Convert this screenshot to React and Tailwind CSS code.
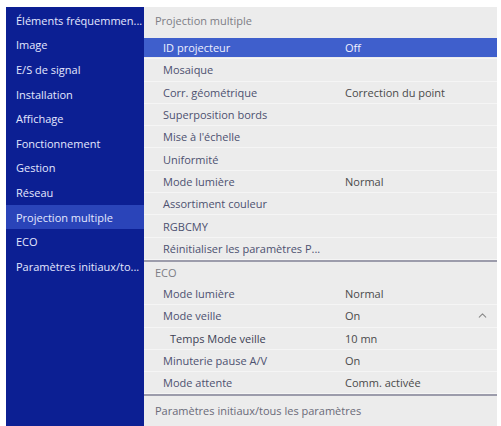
import React from 'react';
import { ChevronUp } from 'lucide-react';

const sideItems = [
  'Éléments fréquemmen...',
  'Image',
  'E/S de signal',
  'Installation',
  'Affichage',
  'Fonctionnement',
  'Gestion',
  'Réseau',
  'Projection multiple',
  'ECO',
  'Paramètres initiaux/to...',
];

const multiRows = [
  { label: 'ID projecteur', value: 'Off', active: true },
  { label: 'Mosaique' },
  { label: 'Corr. géométrique', value: 'Correction du point' },
  { label: 'Superposition bords' },
  { label: "Mise à l'échelle" },
  { label: 'Uniformité' },
  { label: 'Mode lumière', value: 'Normal' },
  { label: 'Assortiment couleur' },
  { label: 'RGBCMY' },
  { label: 'Réinitialiser les paramètres P...' },
];

const ecoRows = [
  { label: 'Mode lumière', value: 'Normal' },
  { label: 'Mode veille', value: 'On', chevron: true },
  { label: 'Temps Mode veille', value: '10 mn', indent: true },
  { label: 'Minuterie pause A/V', value: 'On' },
  { label: 'Mode attente', value: 'Comm. activée' },
];

const Row = ({ label, value, active, indent, chevron }) => (
  <div className="h-[22.3px] flex items-stretch border-b border-[#f5f5f5]">
    <div
      className={`flex-1 flex items-center ${
        active ? 'bg-[#3f5fcc] text-[#eef0ff] my-[1px]' : 'text-[#4c5170]'
      }`}
    >
      <span className={`w-[201px] shrink-0 whitespace-nowrap ${indent ? 'pl-[26px] text-[#3c3f55]' : 'pl-[19px]'}`}>
        {label}
      </span>
      {value && (
        <span className={active ? 'text-[#f2f2ff]' : 'text-[#4a4a4a]'}>{value}</span>
      )}
      {chevron && <ChevronUp size={13} className="ml-auto mr-[8px] text-[#8a8a8a]" />}
    </div>
  </div>
);

export default function App() {
  return (
    <div
      className="w-[501px] h-[426px] bg-white pt-[7px] pl-[6px] pr-[4px] flex overflow-hidden text-[11px] leading-[15px]"
      style={{ fontFamily: '"Open Sans", "Noto Sans", sans-serif' }}
    >
      <div className="w-[138px] shrink-0 bg-[#0c1f93] text-[#e4e8ff] pt-[1px]">
        {sideItems.map((s) => (
          <div
            key={s}
            className={`h-[24.6px] flex items-center pl-[10px] whitespace-nowrap ${
              s === 'Projection multiple' ? 'bg-[#2a44b9]' : ''
            }`}
          >
            {s}
          </div>
        ))}
      </div>
      <div className="flex-1 bg-[#ececec] flex flex-col">
        <div className="h-[26px] flex items-center pl-[11px] text-[#7d7d85] mb-[4px]">
          Projection multiple
        </div>
        {multiRows.map((r, i) => (
          <Row key={i} {...r} />
        ))}
        <div className="h-[2px] bg-[#9c9cab]" />
        <div className="h-[21px] flex items-center pl-[11px] text-[#7d7d85]">ECO</div>
        {ecoRows.map((r, i) => (
          <Row key={i} {...r} />
        ))}
        <div className="h-[2px] bg-[#9c9cab]" />
        <div className="h-[28px] flex items-center pl-[11px] text-[#6a6a78]">
          Paramètres initiaux/tous les paramètres
        </div>
      </div>
    </div>
  );
}
